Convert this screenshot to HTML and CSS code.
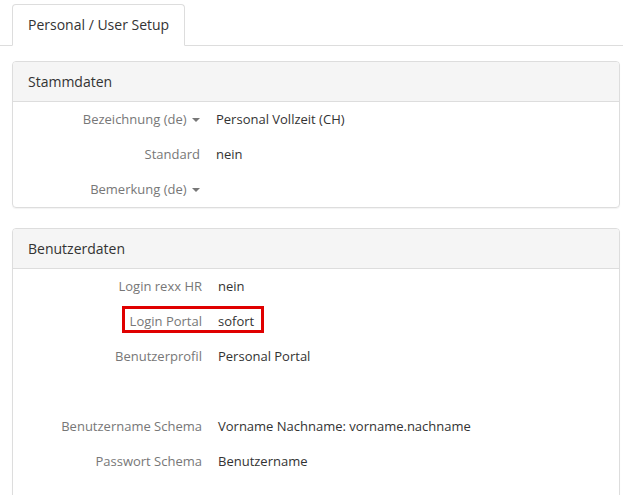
FILE: index.html
```html
<!DOCTYPE html>
<html>
<head>
<meta charset="utf-8">
<link rel="stylesheet" href="styles.css">
</head>
<body>
<div class="tabs">
  <div class="tab">Personal / User Setup</div>
</div>
<div class="content">
  <section class="panel">
    <div class="panel-head">Stammdaten</div>
    <div class="rows rows-a">
      <div class="lbl">Bezeichnung (de) <span class="caret"></span></div><div class="val">Personal Vollzeit (CH)</div>
      <div class="lbl">Standard</div><div class="val">nein</div>
      <div class="lbl">Bemerkung (de) <span class="caret"></span></div><div class="val"></div>
    </div>
  </section>
  <section class="panel">
    <div class="panel-head">Benutzerdaten</div>
    <div class="rows rows-b">
      <div class="lbl">Login rexx HR</div><div class="val">nein</div>
      <div class="lbl hl-l">Login Portal</div><div class="val hl-v">sofort</div>
      <div class="lbl">Benutzerprofil</div><div class="val">Personal Portal</div>
      <div class="lbl"></div><div class="val"></div>
      <div class="lbl">Benutzername Schema</div><div class="val">Vorname Nachname: vorname.nachname</div>
      <div class="lbl">Passwort Schema</div><div class="val">Benutzername</div>
    </div>
  </section>
</div>
</body>
</html>
```
FILE: styles.css
```css
* { box-sizing: border-box; }
html, body { margin: 0; padding: 0; background: #fff; }
body {
  font-family: "Open Sans", "Liberation Sans", sans-serif;
  font-size: 13px;
  color: #333;
  width: 623px;
  height: 495px;
  overflow: hidden;
}
.tabs {
  padding: 4px 0 0 12px;
  border-bottom: 1px solid #ddd;
  display: flex;
}
.tab {
  width: 173px;
  height: 42px;
  margin-bottom: -1px;
  border: 1px solid #ddd;
  border-bottom-color: #fff;
  border-radius: 4px 4px 0 0;
  background: #fff;
  font-size: 14px;
  padding-left: 15px;
  line-height: 40px;
  color: #333;
}
.content {
  padding: 15px 3px 0 12px;
  display: flex;
  flex-direction: column;
  gap: 20px;
}
.panel {
  border: 1px solid #ddd;
  border-radius: 4px;
  box-shadow: 0 1px 1px rgba(0,0,0,0.05);
  overflow: hidden;
}
.panel-head {
  background: #f5f5f5;
  border-bottom: 1px solid #ddd;
  height: 40px;
  line-height: 39px;
  padding-left: 15px;
  font-size: 14px;
  color: #333;
}
.rows {
  display: grid;
  column-gap: 16px;
  grid-auto-rows: 35px;
  align-items: center;
}
.rows > div { margin-top: -2px; }
.rows-a { grid-template-columns: 187px 1fr; }
.rows-b { grid-template-columns: 189px 1fr; padding-bottom: 30px; }
.lbl {
  text-align: right;
  color: #777;
  white-space: nowrap;
  position: relative;
}
.val { color: #333; white-space: nowrap; position: relative; }
.caret {
  display: inline-block;
  width: 0;
  height: 0;
  margin-left: 2px;
  vertical-align: middle;
  border-top: 4px solid #777;
  border-left: 4px solid transparent;
  border-right: 4px solid transparent;
}
.hl-l::before {
  content: "";
  position: absolute;
  left: 109px;
  top: -6px;
  width: 142px;
  height: 27px;
  border: 3px solid #e00000;
  box-sizing: border-box;
  pointer-events: none;
}
```
